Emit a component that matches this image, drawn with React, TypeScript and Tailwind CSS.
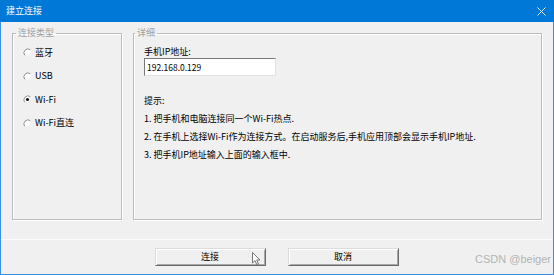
import React from 'react';

const cjk = { fontFamily: '"Noto Sans CJK SC", "Noto Sans", sans-serif' };

const Radio: React.FC<{ checked?: boolean }> = ({ checked }) => (
  <svg width="9" height="9" viewBox="0 0 9 9" className="shrink-0">
    <circle cx="4.5" cy="4.5" r="4" fill="#fff" />
    <path d="M7.3 1.7 A4 4 0 0 0 1.7 7.3" fill="none" stroke="#8a8a8a" strokeWidth="1" />
    <path d="M1.7 7.3 A4 4 0 0 0 7.3 1.7" fill="none" stroke="#e8e8e8" strokeWidth="1" />
    {checked && <circle cx="4.5" cy="4.5" r="1.6" fill="#111" />}
  </svg>
);

const options = [
  { label: '蓝牙' },
  { label: 'USB' },
  { label: 'Wi-Fi', checked: true },
  { label: 'Wi-Fi直连' },
];

const tips = [
  '1. 把手机和电脑连接同一个Wi-Fi热点.',
  '2. 在手机上选择Wi-Fi作为连接方式。在启动服务后,手机应用顶部会显示手机IP地址.',
  '3. 把手机IP地址输入上面的输入框中.',
];

const groupBox =
  'border border-[#bcbcbc] shadow-[1px_1px_0_#fff,inset_1px_1px_0_#fff] h-[193px] min-w-0';

const btn =
  'w-[111px] h-[18px] flex items-center justify-center bg-[#f0f0f0] border border-t-[#dcdcdc] border-l-[#dcdcdc] border-b-[#6b6b6b] border-r-[#6b6b6b] shadow-[inset_1px_1px_0_#fff,inset_-1px_-1px_0_#a8a8a8] text-[9px] leading-[12px] text-black';

export default function App() {
  return (
    <div className="relative w-[554px] h-[275px] flex flex-col bg-[#f0f0f0] overflow-hidden" style={cjk}>
      {/* Title bar */}
      <div className="h-[22px] shrink-0 bg-[#0078d7] flex items-center justify-between pl-[6px] pr-[8px]">
        <span className="text-white text-[9px] leading-[12px]">建立连接</span>
        <svg width="9" height="9" viewBox="0 0 9 9">
          <path d="M0.5 0.5 L8.5 8.5 M8.5 0.5 L0.5 8.5" stroke="#fff" strokeWidth="0.9" />
        </svg>
      </div>

      <div className="flex-1 flex flex-col border-x border-b border-[#3d8fdb]">
        {/* Groups */}
        <div className="flex gap-[11px] pl-[11px] pr-[11px] pt-[5px]">
          <fieldset className={`${groupBox} w-[110px] pl-[3px]`}>
            <legend className="px-[2px] text-[9px] leading-[12px] text-[#a0a0a0]">连接类型</legend>
            <div className="flex flex-col pl-[7px] pt-[2px]">
              {options.map((o) => (
                <div key={o.label} className="h-[23.5px] flex items-center gap-[3px]">
                  <Radio checked={o.checked} />
                  <span className="text-[9px] leading-[12px] text-black">{o.label}</span>
                </div>
              ))}
            </div>
          </fieldset>

          <fieldset className={`${groupBox} flex-1 pl-[1px]`}>
            <legend className="px-[2px] text-[9px] leading-[12px] text-[#a0a0a0]">详细</legend>
            <div className="flex flex-col pl-[9px] text-black text-[9px] leading-[12px]">
              <div className="mt-[7px]">手机IP地址:</div>
              <div className="w-[132px] h-[18px] bg-white border border-t-[#7a7a7a] border-l-[#7a7a7a] border-b-[#e3e3e3] border-r-[#e3e3e3] flex items-center pl-[2px]">
                <span className="text-[8.5px] leading-[12px]">192.168.0.129</span>
              </div>
              <div className="mt-[19px]">提示:</div>
              {tips.map((t) => (
                <div key={t} className="mt-[6px] whitespace-nowrap">{t}</div>
              ))}
            </div>
          </fieldset>
        </div>

        {/* Separator */}
        <div className="mt-[19px] h-px bg-[#fbfbfb]" />

        {/* Buttons */}
        <div className="mt-[8px] flex justify-center gap-[22px] pr-[1px]">
          <div className={btn}>连接</div>
          <div className={btn}>取消</div>
        </div>
      </div>

      {/* Mouse cursor */}
      <svg className="absolute left-[252px] top-[252px]" width="9" height="14" viewBox="0 0 9 14">
        <path d="M0.5 0.5 L0.5 11 L3 8.6 L4.8 12.6 L6.4 11.9 L4.7 8 L8 8 Z" fill="#fff" stroke="#555" strokeWidth="0.8" />
      </svg>

      {/* Watermark */}
      <span
        className="absolute right-[3px] bottom-[10px] text-[11px] leading-[12px] text-[#b4b4b4]"
        style={{ fontFamily: '"Liberation Sans", Arial, sans-serif' }}
      >
        CSDN @beiger
      </span>
    </div>
  );
}
